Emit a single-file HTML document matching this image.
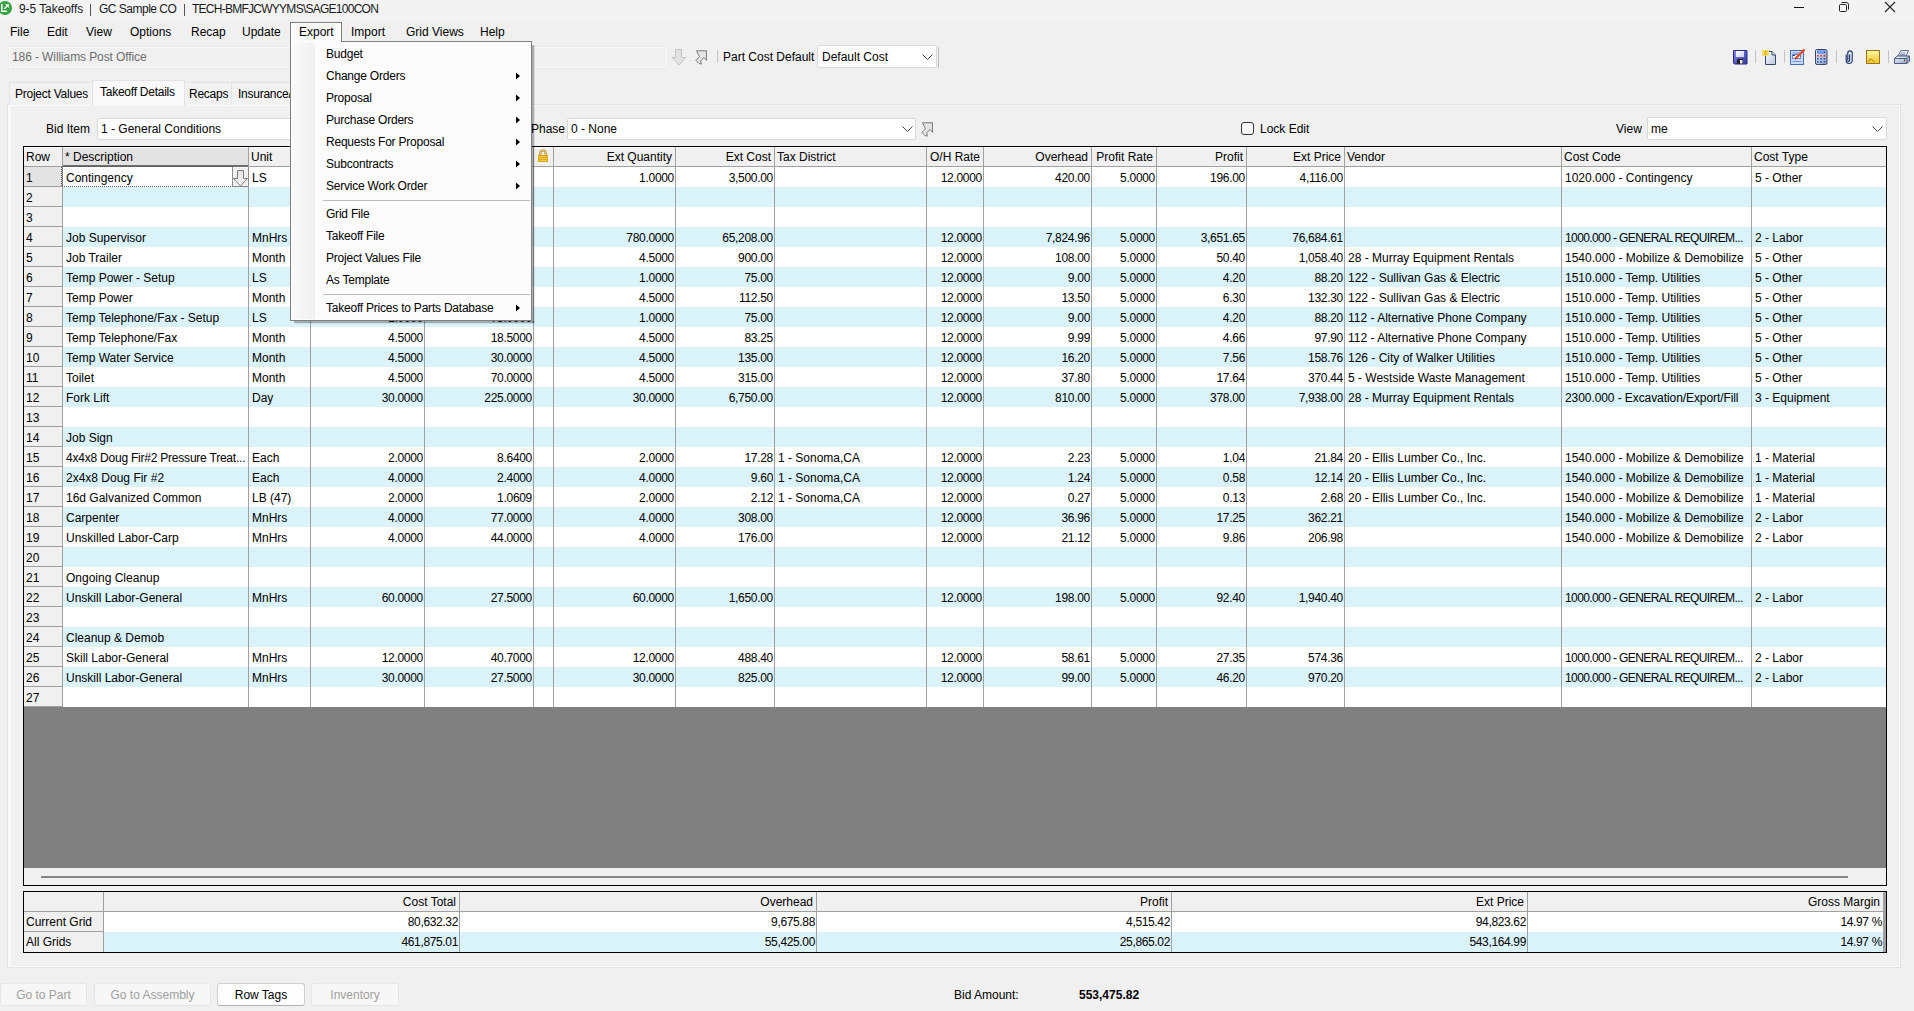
<!DOCTYPE html><html><head><meta charset="utf-8"><style>
html,body{margin:0;padding:0;}
body{width:1914px;height:1011px;position:relative;overflow:hidden;background:#f0f0f0;font-family:"Liberation Sans", sans-serif;font-size:12px;color:#000;}
div{position:absolute;box-sizing:border-box;}
.t{white-space:nowrap;line-height:14px;height:14px;}
.r{text-align:right;}
svg{position:absolute;}

</style></head><body>
<div style="left:0px;top:0px;width:1914px;height:20px;background:#f3f3f3"></div>
<svg style="left:0;top:0px" width="13" height="16" viewBox="0 0 13 16"><circle cx="5" cy="8" r="7" fill="#35a33e"/><path d="M1.8 4v8M2.2 11.3h4.8" stroke="#fff" stroke-width="1.6" fill="none"/><path d="M4.3 8.7l3.8-3.8" stroke="#fff" stroke-width="1.4"/><path d="M5 4.2h3.9v3.9z" fill="#fff"/></svg>
<div class="t" style="left:19px;top:2px;color:#1a1a1a;letter-spacing:-0.07px">9-5 Takeoffs</div>
<div style="left:90px;top:4px;width:1px;height:12px;background:#555"></div>
<div class="t" style="left:99px;top:2px;color:#1a1a1a;letter-spacing:-0.5px">GC Sample CO</div>
<div style="left:184px;top:4px;width:1px;height:12px;background:#555"></div>
<div class="t" style="left:192px;top:2px;color:#1a1a1a;letter-spacing:-0.74px">TECH-BMFJCWYYMS\SAGE100CON</div>
<div style="left:1794px;top:7px;width:10px;height:1px;background:#111"></div>
<svg style="left:1838px;top:1px" width="12" height="12" viewBox="0 0 12 12"><rect x="1.5" y="3.5" width="7" height="7" rx="1" fill="none" stroke="#222"/><path d="M3.5 1.5h5a2 2 0 0 1 2 2v5" fill="none" stroke="#222"/></svg>
<svg style="left:1884px;top:1px" width="12" height="12" viewBox="0 0 12 12"><path d="M1 1L11 11M11 1L1 11" stroke="#222" stroke-width="1.1"/></svg>
<div class="t" style="left:10px;top:25px;">File</div>
<div class="t" style="left:47px;top:25px;">Edit</div>
<div class="t" style="left:86px;top:25px;">View</div>
<div class="t" style="left:130px;top:25px;">Options</div>
<div class="t" style="left:191px;top:25px;">Recap</div>
<div class="t" style="left:242px;top:25px;">Update</div>
<div class="t" style="left:299px;top:25px;">Export</div>
<div class="t" style="left:351px;top:25px;">Import</div>
<div class="t" style="left:406px;top:25px;">Grid Views</div>
<div class="t" style="left:480px;top:25px;">Help</div>
<div style="left:8px;top:46px;width:660px;height:23px;border:1px solid #e9e9e9"></div>
<div style="left:9px;top:47px;width:658px;height:21px;background:#f0f0f0;border:1px solid #fafafa"></div>
<div class="t" style="left:12px;top:50px;color:#6d6d6d;letter-spacing:-0.1px">186 - Williams Post Office</div>
<svg style="left:671px;top:49px" width="16" height="17" viewBox="0 0 16 17"><path d="M4.5 0.5h6v8h4.5l-7 7.5-7-7.5h3.5z" fill="#e2e2e2" stroke="#c4c4c4"/></svg>
<svg style="left:695px;top:50px" width="13" height="15" viewBox="0 0 13 15"><path d="M1.5 0.8h10v9.5l-2.6-2.8-3.2 3.4 0.6 3.2-2.4-0.6-3-3 3.6-3.8z" fill="#e4e4e4" stroke="#7a7a7a" stroke-linejoin="round"/></svg>
<div style="left:717px;top:50px;width:1px;height:13px;background:#c4c4c4"></div>
<div class="t" style="left:723px;top:50px;">Part Cost Default</div>
<div style="left:817px;top:45px;width:120px;height:23px;background:#fff;border:1px solid #d9d9d9;border-radius:2px"></div>
<div class="t" style="left:822px;top:50px;">Default Cost</div>
<svg style="left:922px;top:54px" width="11" height="7" viewBox="0 0 11 7"><path d="M0.5 0.5l5 5 5-5" fill="none" stroke="#444"/></svg>
<div style="left:938px;top:47px;width:1px;height:21px;background:#bdbdbd"></div>
<svg style="left:1733px;top:50px" width="15" height="15" viewBox="0 0 15 15"><defs><linearGradient id="fl" x1="0" y1="0" x2="1" y2="1"><stop offset="0" stop-color="#8a8af0"/><stop offset="1" stop-color="#3232a0"/></linearGradient><linearGradient id="lb" x1="0" y1="0" x2="1" y2="1"><stop offset="0" stop-color="#ffffff"/><stop offset="1" stop-color="#c8d0e8"/></linearGradient></defs><path d="M0.5 0.5h13.5v13.5h-12.5l-1-1z" fill="url(#fl)" stroke="#2a2a88"/><rect x="3" y="1" width="8" height="6" fill="url(#lb)"/><rect x="4" y="9" width="6" height="5" fill="#222"/><rect x="7" y="10" width="2.5" height="3.5" fill="#e8e8e8"/></svg>
<div style="left:1755px;top:50px;width:1px;height:13px;background:#c4c4c4"></div>
<svg style="left:1762px;top:50px" width="15" height="16" viewBox="0 0 15 16"><defs><linearGradient id="pg" x1="0" y1="0" x2="1" y2="1"><stop offset="0" stop-color="#ffffff"/><stop offset="1" stop-color="#b8c4dc"/></linearGradient></defs><path d="M3.5 1.5h6.5l3.5 3.5v9.5h-10z" fill="url(#pg)" stroke="#34486a"/><path d="M10 1.5v3.5h3.5" fill="#e8eef8" stroke="#34486a"/><rect x="0" y="0" width="7" height="6" fill="#f7e26a" opacity="0.9"/><path d="M1 1l5 4M6 1l-5 4M3.5 0v6" stroke="#e8b820" stroke-width="1"/></svg>
<div style="left:1784px;top:50px;width:1px;height:13px;background:#c4c4c4"></div>
<svg style="left:1789px;top:48px" width="17" height="18" viewBox="0 0 17 18"><rect x="1.5" y="2.5" width="13" height="14" fill="#c6ddf8" stroke="#4a68b8"/><rect x="3.5" y="4.5" width="9" height="1" fill="#7a94c8"/><rect x="3.5" y="6.5" width="8" height="4" fill="#fff" stroke="#6a86c0"/><rect x="4" y="7" width="2" height="1" fill="#2030e0"/><rect x="3.5" y="13" width="9" height="1" fill="#7a94c8"/><path d="M6.5 10.5l9-9" stroke="#f04a20" stroke-width="2.4"/><path d="M6 11l1.5-0.5" stroke="#802010" stroke-width="1"/></svg>
<svg style="left:1815px;top:49px" width="13" height="16" viewBox="0 0 13 16"><defs><linearGradient id="cg" x1="0" y1="0" x2="1" y2="1"><stop offset="0" stop-color="#f4f6fc"/><stop offset="1" stop-color="#8898b8"/></linearGradient></defs><rect x="0.5" y="0.5" width="11.5" height="15" rx="1.5" fill="url(#cg)" stroke="#3a4660"/><rect x="2" y="1.5" width="8.5" height="3" rx="1.2" fill="#2a6ae0"/><rect x="3" y="2.5" width="6" height="1" fill="#bcd4ff"/><g fill="#d82a3a"><rect x="2" y="6" width="1.6" height="1.6"/><rect x="5.3" y="6" width="1.6" height="1.6"/><rect x="8.6" y="6" width="1.6" height="1.6"/></g><g fill="#1a5ad8"><rect x="2" y="9" width="1.6" height="1.6"/><rect x="5.3" y="9" width="1.6" height="1.6"/><rect x="8.6" y="9" width="1.6" height="1.6"/><rect x="2" y="12" width="1.6" height="1.6"/><rect x="5.3" y="12" width="1.6" height="1.6"/><rect x="8.6" y="12" width="1.6" height="1.6"/></g></svg>
<div style="left:1836px;top:50px;width:1px;height:13px;background:#c4c4c4"></div>
<svg style="left:1845px;top:50px" width="9" height="15" viewBox="0 0 9 15"><path d="M1.2 4.5v6a3 3 0 0 0 6 0V3a2.2 2.2 0 0 0-4.4 0v7.5a0.9 0.9 0 0 0 1.8 0V4.5" fill="none" stroke="#1f3a78" stroke-width="1.2"/></svg>
<svg style="left:1866px;top:50px" width="15" height="15" viewBox="0 0 15 15"><defs><linearGradient id="yg" x1="0" y1="0" x2="0" y2="1"><stop offset="0" stop-color="#fff6a0"/><stop offset="1" stop-color="#f0c828"/></linearGradient></defs><rect x="0.5" y="0.5" width="13" height="13" fill="url(#yg)" stroke="#9a7418"/><path d="M2 11.5l2.5-2.5 2.5 1.5 1.5 2" stroke="#c89a18" fill="none" stroke-width="1.2"/></svg>
<div style="left:1888px;top:50px;width:1px;height:13px;background:#c4c4c4"></div>
<svg style="left:1894px;top:50px" width="16" height="15" viewBox="0 0 16 15"><defs><linearGradient id="prg" x1="0" y1="0" x2="1" y2="1"><stop offset="0" stop-color="#ffffff"/><stop offset="1" stop-color="#8a9cc0"/></linearGradient></defs><path d="M4 6L7 0.5h7.5L12 6z" fill="#eef2fa" stroke="#5a6c90"/><path d="M6.5 3h5M6 4.5h5" stroke="#8a9ab8"/><path d="M0.5 8.5L3 6h12.5v5L13 13.5H0.5z" fill="url(#prg)" stroke="#4a5c80"/><path d="M0.5 8.5h12.5v5M13 8.5l2.5-2.5" fill="none" stroke="#4a5c80"/><rect x="10" y="9.5" width="1" height="2" fill="#d02020"/><rect x="10" y="9" width="1" height="1" fill="#20a040"/></svg>
<div style="left:7px;top:104px;width:1894px;height:864px;border:1px solid #e3e3e3;background:#f0f0f0"></div>
<div style="left:8px;top:105px;width:3px;height:862px;background:#f9f9f9"></div>
<div style="left:8px;top:105px;width:1892px;height:1px;background:#f9f9f9"></div>
<div style="left:1899px;top:105px;width:1px;height:862px;background:#fafafa"></div>
<div style="left:8px;top:966px;width:1892px;height:1px;background:#fafafa"></div>
<div style="left:9px;top:82px;width:84px;height:23px;background:#f2f2f2;border:1px solid #e3e3e3;border-bottom:none"></div>
<div class="t" style="left:15px;top:87px;letter-spacing:-0.25px">Project Values</div>
<div style="left:184px;top:82px;width:48px;height:23px;background:#f2f2f2;border:1px solid #e3e3e3;border-bottom:none"></div>
<div class="t" style="left:189px;top:87px;letter-spacing:-0.25px">Recaps</div>
<div style="left:231px;top:82px;width:70px;height:23px;background:#f2f2f2;border:1px solid #e3e3e3;border-bottom:none"></div>
<div class="t" style="left:238px;top:87px;letter-spacing:-0.25px">Insurance/...</div>
<div style="left:92px;top:80px;width:93px;height:26px;background:#f9f9f9;border:1px solid #e3e3e3;border-bottom:none"></div>
<div class="t" style="left:100px;top:85px;letter-spacing:-0.25px">Takeoff Details</div>
<div class="t" style="left:46px;top:122px;">Bid Item</div>
<div style="left:97px;top:118px;width:300px;height:22px;background:#fff;border:1px solid #d9d9d9;border-radius:2px"></div>
<div class="t" style="left:101px;top:122px;">1 - General Conditions</div>
<div class="t" style="left:531px;top:122px;">Phase</div>
<div style="left:567px;top:118px;width:349px;height:22px;background:#fff;border:1px solid #d9d9d9;border-radius:2px"></div>
<div class="t" style="left:571px;top:122px;">0 - None</div>
<svg style="left:902px;top:126px" width="11" height="7" viewBox="0 0 11 7"><path d="M0.5 0.5l5 5 5-5" fill="none" stroke="#444"/></svg>
<svg style="left:921px;top:122px" width="13" height="15" viewBox="0 0 13 15"><path d="M1.5 0.8h10v9.5l-2.6-2.8-3.2 3.4 0.6 3.2-2.4-0.6-3-3 3.6-3.8z" fill="#e4e4e4" stroke="#7a7a7a" stroke-linejoin="round"/></svg>
<div style="left:1241px;top:122px;width:13px;height:13px;background:#f7f7f7;border:1px solid #333;border-radius:3px"></div>
<div class="t" style="left:1260px;top:122px;">Lock Edit</div>
<div class="t" style="left:1616px;top:122px;">View</div>
<div style="left:1647px;top:117px;width:240px;height:23px;background:#fff;border:1px solid #d9d9d9;border-radius:2px"></div>
<div class="t" style="left:1651px;top:122px;">me</div>
<svg style="left:1872px;top:126px" width="11" height="7" viewBox="0 0 11 7"><path d="M0.5 0.5l5 5 5-5" fill="none" stroke="#444"/></svg>
<div style="left:23px;top:146px;width:1864px;height:740px;border:1px solid #000;background:#f0f0f0"></div>
<div style="left:63px;top:167px;width:1823px;height:20px;background:#ffffff"></div>
<div style="left:63px;top:187px;width:1823px;height:20px;background:#daf2f9"></div>
<div style="left:63px;top:207px;width:1823px;height:20px;background:#ffffff"></div>
<div style="left:63px;top:227px;width:1823px;height:20px;background:#daf2f9"></div>
<div style="left:63px;top:247px;width:1823px;height:20px;background:#ffffff"></div>
<div style="left:63px;top:267px;width:1823px;height:20px;background:#daf2f9"></div>
<div style="left:63px;top:287px;width:1823px;height:20px;background:#ffffff"></div>
<div style="left:63px;top:307px;width:1823px;height:20px;background:#daf2f9"></div>
<div style="left:63px;top:327px;width:1823px;height:20px;background:#ffffff"></div>
<div style="left:63px;top:347px;width:1823px;height:20px;background:#daf2f9"></div>
<div style="left:63px;top:367px;width:1823px;height:20px;background:#ffffff"></div>
<div style="left:63px;top:387px;width:1823px;height:20px;background:#daf2f9"></div>
<div style="left:63px;top:407px;width:1823px;height:20px;background:#ffffff"></div>
<div style="left:63px;top:427px;width:1823px;height:20px;background:#daf2f9"></div>
<div style="left:63px;top:447px;width:1823px;height:20px;background:#ffffff"></div>
<div style="left:63px;top:467px;width:1823px;height:20px;background:#daf2f9"></div>
<div style="left:63px;top:487px;width:1823px;height:20px;background:#ffffff"></div>
<div style="left:63px;top:507px;width:1823px;height:20px;background:#daf2f9"></div>
<div style="left:63px;top:527px;width:1823px;height:20px;background:#ffffff"></div>
<div style="left:63px;top:547px;width:1823px;height:20px;background:#daf2f9"></div>
<div style="left:63px;top:567px;width:1823px;height:20px;background:#ffffff"></div>
<div style="left:63px;top:587px;width:1823px;height:20px;background:#daf2f9"></div>
<div style="left:63px;top:607px;width:1823px;height:20px;background:#ffffff"></div>
<div style="left:63px;top:627px;width:1823px;height:20px;background:#daf2f9"></div>
<div style="left:63px;top:647px;width:1823px;height:20px;background:#ffffff"></div>
<div style="left:63px;top:667px;width:1823px;height:20px;background:#daf2f9"></div>
<div style="left:63px;top:687px;width:1823px;height:20px;background:#ffffff"></div>
<div style="left:24px;top:707px;width:1862px;height:161px;background:#808080"></div>
<div style="left:41px;top:876px;width:1807px;height:2px;background:#858585"></div>
<div style="left:24px;top:147px;width:1862px;height:20px;background:#f0f0f0"></div>
<div style="left:24px;top:147px;width:38px;height:1px;background:#fbfbfb"></div>
<div class="t" style="left:26px;top:150px;">Row</div>
<div style="left:63px;top:147px;width:185px;height:20px;background:#e3e3e3;border-bottom:2px solid #6e6e6e"></div>
<div style="left:63px;top:147px;width:185px;height:1px;background:#fbfbfb"></div>
<div class="t" style="left:65px;top:150px;">* Description</div>
<div style="left:249px;top:147px;width:61px;height:1px;background:#fbfbfb"></div>
<div class="t" style="left:251px;top:150px;">Unit</div>
<div style="left:311px;top:147px;width:113px;height:1px;background:#fbfbfb"></div>
<div class="t r" style="left:21px;width:400px;top:150px;">Quantity</div>
<div style="left:425px;top:147px;width:108px;height:1px;background:#fbfbfb"></div>
<div class="t r" style="left:130px;width:400px;top:150px;">Unit Cost</div>
<div style="left:534px;top:147px;width:19px;height:1px;background:#fbfbfb"></div>
<div style="left:554px;top:147px;width:121px;height:1px;background:#fbfbfb"></div>
<div class="t r" style="left:272px;width:400px;top:150px;">Ext Quantity</div>
<div style="left:676px;top:147px;width:98px;height:1px;background:#fbfbfb"></div>
<div class="t r" style="left:371px;width:400px;top:150px;">Ext Cost</div>
<div style="left:775px;top:147px;width:151px;height:1px;background:#fbfbfb"></div>
<div class="t" style="left:777px;top:150px;">Tax District</div>
<div style="left:927px;top:147px;width:56px;height:1px;background:#fbfbfb"></div>
<div class="t r" style="left:580px;width:400px;top:150px;">O/H Rate</div>
<div style="left:984px;top:147px;width:107px;height:1px;background:#fbfbfb"></div>
<div class="t r" style="left:688px;width:400px;top:150px;">Overhead</div>
<div style="left:1092px;top:147px;width:64px;height:1px;background:#fbfbfb"></div>
<div class="t r" style="left:753px;width:400px;top:150px;">Profit Rate</div>
<div style="left:1157px;top:147px;width:89px;height:1px;background:#fbfbfb"></div>
<div class="t r" style="left:843px;width:400px;top:150px;">Profit</div>
<div style="left:1247px;top:147px;width:97px;height:1px;background:#fbfbfb"></div>
<div class="t r" style="left:941px;width:400px;top:150px;">Ext Price</div>
<div style="left:1345px;top:147px;width:216px;height:1px;background:#fbfbfb"></div>
<div class="t" style="left:1347px;top:150px;">Vendor</div>
<div style="left:1562px;top:147px;width:189px;height:1px;background:#fbfbfb"></div>
<div class="t" style="left:1564px;top:150px;">Cost Code</div>
<div style="left:1752px;top:147px;width:134px;height:1px;background:#fbfbfb"></div>
<div class="t" style="left:1754px;top:150px;">Cost Type</div>
<div style="left:24px;top:166px;width:1862px;height:1px;background:#a0a0a0"></div>
<div style="left:63px;top:165px;width:185px;height:2px;background:#6e6e6e"></div>
<div style="left:24px;top:167px;width:38px;height:20px;background:#e3e3e3"></div>
<div style="left:24px;top:186px;width:38px;height:1px;background:#a0a0a0"></div>
<div class="t" style="left:26px;top:171px;">1</div>
<div style="left:24px;top:187px;width:38px;height:20px;background:#f0f0f0"></div>
<div style="left:24px;top:206px;width:38px;height:1px;background:#a0a0a0"></div>
<div class="t" style="left:26px;top:191px;">2</div>
<div style="left:24px;top:207px;width:38px;height:20px;background:#f0f0f0"></div>
<div style="left:24px;top:226px;width:38px;height:1px;background:#a0a0a0"></div>
<div class="t" style="left:26px;top:211px;">3</div>
<div style="left:24px;top:227px;width:38px;height:20px;background:#f0f0f0"></div>
<div style="left:24px;top:246px;width:38px;height:1px;background:#a0a0a0"></div>
<div class="t" style="left:26px;top:231px;">4</div>
<div style="left:24px;top:247px;width:38px;height:20px;background:#f0f0f0"></div>
<div style="left:24px;top:266px;width:38px;height:1px;background:#a0a0a0"></div>
<div class="t" style="left:26px;top:251px;">5</div>
<div style="left:24px;top:267px;width:38px;height:20px;background:#f0f0f0"></div>
<div style="left:24px;top:286px;width:38px;height:1px;background:#a0a0a0"></div>
<div class="t" style="left:26px;top:271px;">6</div>
<div style="left:24px;top:287px;width:38px;height:20px;background:#f0f0f0"></div>
<div style="left:24px;top:306px;width:38px;height:1px;background:#a0a0a0"></div>
<div class="t" style="left:26px;top:291px;">7</div>
<div style="left:24px;top:307px;width:38px;height:20px;background:#f0f0f0"></div>
<div style="left:24px;top:326px;width:38px;height:1px;background:#a0a0a0"></div>
<div class="t" style="left:26px;top:311px;">8</div>
<div style="left:24px;top:327px;width:38px;height:20px;background:#f0f0f0"></div>
<div style="left:24px;top:346px;width:38px;height:1px;background:#a0a0a0"></div>
<div class="t" style="left:26px;top:331px;">9</div>
<div style="left:24px;top:347px;width:38px;height:20px;background:#f0f0f0"></div>
<div style="left:24px;top:366px;width:38px;height:1px;background:#a0a0a0"></div>
<div class="t" style="left:26px;top:351px;">10</div>
<div style="left:24px;top:367px;width:38px;height:20px;background:#f0f0f0"></div>
<div style="left:24px;top:386px;width:38px;height:1px;background:#a0a0a0"></div>
<div class="t" style="left:26px;top:371px;">11</div>
<div style="left:24px;top:387px;width:38px;height:20px;background:#f0f0f0"></div>
<div style="left:24px;top:406px;width:38px;height:1px;background:#a0a0a0"></div>
<div class="t" style="left:26px;top:391px;">12</div>
<div style="left:24px;top:407px;width:38px;height:20px;background:#f0f0f0"></div>
<div style="left:24px;top:426px;width:38px;height:1px;background:#a0a0a0"></div>
<div class="t" style="left:26px;top:411px;">13</div>
<div style="left:24px;top:427px;width:38px;height:20px;background:#f0f0f0"></div>
<div style="left:24px;top:446px;width:38px;height:1px;background:#a0a0a0"></div>
<div class="t" style="left:26px;top:431px;">14</div>
<div style="left:24px;top:447px;width:38px;height:20px;background:#f0f0f0"></div>
<div style="left:24px;top:466px;width:38px;height:1px;background:#a0a0a0"></div>
<div class="t" style="left:26px;top:451px;">15</div>
<div style="left:24px;top:467px;width:38px;height:20px;background:#f0f0f0"></div>
<div style="left:24px;top:486px;width:38px;height:1px;background:#a0a0a0"></div>
<div class="t" style="left:26px;top:471px;">16</div>
<div style="left:24px;top:487px;width:38px;height:20px;background:#f0f0f0"></div>
<div style="left:24px;top:506px;width:38px;height:1px;background:#a0a0a0"></div>
<div class="t" style="left:26px;top:491px;">17</div>
<div style="left:24px;top:507px;width:38px;height:20px;background:#f0f0f0"></div>
<div style="left:24px;top:526px;width:38px;height:1px;background:#a0a0a0"></div>
<div class="t" style="left:26px;top:511px;">18</div>
<div style="left:24px;top:527px;width:38px;height:20px;background:#f0f0f0"></div>
<div style="left:24px;top:546px;width:38px;height:1px;background:#a0a0a0"></div>
<div class="t" style="left:26px;top:531px;">19</div>
<div style="left:24px;top:547px;width:38px;height:20px;background:#f0f0f0"></div>
<div style="left:24px;top:566px;width:38px;height:1px;background:#a0a0a0"></div>
<div class="t" style="left:26px;top:551px;">20</div>
<div style="left:24px;top:567px;width:38px;height:20px;background:#f0f0f0"></div>
<div style="left:24px;top:586px;width:38px;height:1px;background:#a0a0a0"></div>
<div class="t" style="left:26px;top:571px;">21</div>
<div style="left:24px;top:587px;width:38px;height:20px;background:#f0f0f0"></div>
<div style="left:24px;top:606px;width:38px;height:1px;background:#a0a0a0"></div>
<div class="t" style="left:26px;top:591px;">22</div>
<div style="left:24px;top:607px;width:38px;height:20px;background:#f0f0f0"></div>
<div style="left:24px;top:626px;width:38px;height:1px;background:#a0a0a0"></div>
<div class="t" style="left:26px;top:611px;">23</div>
<div style="left:24px;top:627px;width:38px;height:20px;background:#f0f0f0"></div>
<div style="left:24px;top:646px;width:38px;height:1px;background:#a0a0a0"></div>
<div class="t" style="left:26px;top:631px;">24</div>
<div style="left:24px;top:647px;width:38px;height:20px;background:#f0f0f0"></div>
<div style="left:24px;top:666px;width:38px;height:1px;background:#a0a0a0"></div>
<div class="t" style="left:26px;top:651px;">25</div>
<div style="left:24px;top:667px;width:38px;height:20px;background:#f0f0f0"></div>
<div style="left:24px;top:686px;width:38px;height:1px;background:#a0a0a0"></div>
<div class="t" style="left:26px;top:671px;">26</div>
<div style="left:24px;top:687px;width:38px;height:20px;background:#f0f0f0"></div>
<div style="left:24px;top:706px;width:38px;height:1px;background:#a0a0a0"></div>
<div class="t" style="left:26px;top:691px;">27</div>
<div style="left:62px;top:147px;width:1px;height:560px;background:#a0a0a0"></div>
<div style="left:248px;top:147px;width:1px;height:560px;background:#a0a0a0"></div>
<div style="left:310px;top:147px;width:1px;height:560px;background:#a0a0a0"></div>
<div style="left:424px;top:147px;width:1px;height:560px;background:#a0a0a0"></div>
<div style="left:533px;top:147px;width:1px;height:560px;background:#a0a0a0"></div>
<div style="left:553px;top:147px;width:1px;height:560px;background:#a0a0a0"></div>
<div style="left:675px;top:147px;width:1px;height:560px;background:#a0a0a0"></div>
<div style="left:774px;top:147px;width:1px;height:560px;background:#a0a0a0"></div>
<div style="left:926px;top:147px;width:1px;height:560px;background:#a0a0a0"></div>
<div style="left:983px;top:147px;width:1px;height:560px;background:#a0a0a0"></div>
<div style="left:1091px;top:147px;width:1px;height:560px;background:#a0a0a0"></div>
<div style="left:1156px;top:147px;width:1px;height:560px;background:#a0a0a0"></div>
<div style="left:1246px;top:147px;width:1px;height:560px;background:#a0a0a0"></div>
<div style="left:1344px;top:147px;width:1px;height:560px;background:#a0a0a0"></div>
<div style="left:1561px;top:147px;width:1px;height:560px;background:#a0a0a0"></div>
<div style="left:1751px;top:147px;width:1px;height:560px;background:#a0a0a0"></div>
<div class="t" style="left:66px;width:182px;top:171px;overflow:hidden;">Contingency</div>
<div class="t" style="left:252px;width:58px;top:171px;overflow:hidden;">LS</div>
<div class="t r" style="left:311px;width:112px;top:171px;overflow:hidden;letter-spacing:-0.3px;">1.0000</div>
<div class="t r" style="left:425px;width:107px;top:171px;overflow:hidden;letter-spacing:-0.3px;">3,500.0000</div>
<div class="t r" style="left:554px;width:120px;top:171px;overflow:hidden;letter-spacing:-0.3px;">1.0000</div>
<div class="t r" style="left:676px;width:97px;top:171px;overflow:hidden;letter-spacing:-0.3px;">3,500.00</div>
<div class="t r" style="left:927px;width:55px;top:171px;overflow:hidden;letter-spacing:-0.3px;">12.0000</div>
<div class="t r" style="left:984px;width:106px;top:171px;overflow:hidden;letter-spacing:-0.3px;">420.00</div>
<div class="t r" style="left:1092px;width:63px;top:171px;overflow:hidden;letter-spacing:-0.3px;">5.0000</div>
<div class="t r" style="left:1157px;width:88px;top:171px;overflow:hidden;letter-spacing:-0.3px;">196.00</div>
<div class="t r" style="left:1247px;width:96px;top:171px;overflow:hidden;letter-spacing:-0.3px;">4,116.00</div>
<div class="t" style="left:1565px;width:186px;top:171px;overflow:hidden;">1020.000 - Contingency</div>
<div class="t" style="left:1755px;width:131px;top:171px;overflow:hidden;">5 - Other</div>
<div class="t" style="left:66px;width:182px;top:231px;overflow:hidden;">Job Supervisor</div>
<div class="t" style="left:252px;width:58px;top:231px;overflow:hidden;">MnHrs</div>
<div class="t r" style="left:311px;width:112px;top:231px;overflow:hidden;letter-spacing:-0.3px;">780.0000</div>
<div class="t r" style="left:425px;width:107px;top:231px;overflow:hidden;letter-spacing:-0.3px;">83.6000</div>
<div class="t r" style="left:554px;width:120px;top:231px;overflow:hidden;letter-spacing:-0.3px;">780.0000</div>
<div class="t r" style="left:676px;width:97px;top:231px;overflow:hidden;letter-spacing:-0.3px;">65,208.00</div>
<div class="t r" style="left:927px;width:55px;top:231px;overflow:hidden;letter-spacing:-0.3px;">12.0000</div>
<div class="t r" style="left:984px;width:106px;top:231px;overflow:hidden;letter-spacing:-0.3px;">7,824.96</div>
<div class="t r" style="left:1092px;width:63px;top:231px;overflow:hidden;letter-spacing:-0.3px;">5.0000</div>
<div class="t r" style="left:1157px;width:88px;top:231px;overflow:hidden;letter-spacing:-0.3px;">3,651.65</div>
<div class="t r" style="left:1247px;width:96px;top:231px;overflow:hidden;letter-spacing:-0.3px;">76,684.61</div>
<div class="t" style="left:1565px;width:186px;top:231px;overflow:hidden;letter-spacing:-0.6px;">1000.000 - GENERAL REQUIREM...</div>
<div class="t" style="left:1755px;width:131px;top:231px;overflow:hidden;">2 - Labor</div>
<div class="t" style="left:66px;width:182px;top:251px;overflow:hidden;">Job Trailer</div>
<div class="t" style="left:252px;width:58px;top:251px;overflow:hidden;">Month</div>
<div class="t r" style="left:311px;width:112px;top:251px;overflow:hidden;letter-spacing:-0.3px;">4.5000</div>
<div class="t r" style="left:425px;width:107px;top:251px;overflow:hidden;letter-spacing:-0.3px;">200.0000</div>
<div class="t r" style="left:554px;width:120px;top:251px;overflow:hidden;letter-spacing:-0.3px;">4.5000</div>
<div class="t r" style="left:676px;width:97px;top:251px;overflow:hidden;letter-spacing:-0.3px;">900.00</div>
<div class="t r" style="left:927px;width:55px;top:251px;overflow:hidden;letter-spacing:-0.3px;">12.0000</div>
<div class="t r" style="left:984px;width:106px;top:251px;overflow:hidden;letter-spacing:-0.3px;">108.00</div>
<div class="t r" style="left:1092px;width:63px;top:251px;overflow:hidden;letter-spacing:-0.3px;">5.0000</div>
<div class="t r" style="left:1157px;width:88px;top:251px;overflow:hidden;letter-spacing:-0.3px;">50.40</div>
<div class="t r" style="left:1247px;width:96px;top:251px;overflow:hidden;letter-spacing:-0.3px;">1,058.40</div>
<div class="t" style="left:1348px;width:213px;top:251px;overflow:hidden;">28 - Murray Equipment Rentals</div>
<div class="t" style="left:1565px;width:186px;top:251px;overflow:hidden;">1540.000 - Mobilize &amp; Demobilize</div>
<div class="t" style="left:1755px;width:131px;top:251px;overflow:hidden;">5 - Other</div>
<div class="t" style="left:66px;width:182px;top:271px;overflow:hidden;">Temp Power - Setup</div>
<div class="t" style="left:252px;width:58px;top:271px;overflow:hidden;">LS</div>
<div class="t r" style="left:311px;width:112px;top:271px;overflow:hidden;letter-spacing:-0.3px;">1.0000</div>
<div class="t r" style="left:425px;width:107px;top:271px;overflow:hidden;letter-spacing:-0.3px;">75.0000</div>
<div class="t r" style="left:554px;width:120px;top:271px;overflow:hidden;letter-spacing:-0.3px;">1.0000</div>
<div class="t r" style="left:676px;width:97px;top:271px;overflow:hidden;letter-spacing:-0.3px;">75.00</div>
<div class="t r" style="left:927px;width:55px;top:271px;overflow:hidden;letter-spacing:-0.3px;">12.0000</div>
<div class="t r" style="left:984px;width:106px;top:271px;overflow:hidden;letter-spacing:-0.3px;">9.00</div>
<div class="t r" style="left:1092px;width:63px;top:271px;overflow:hidden;letter-spacing:-0.3px;">5.0000</div>
<div class="t r" style="left:1157px;width:88px;top:271px;overflow:hidden;letter-spacing:-0.3px;">4.20</div>
<div class="t r" style="left:1247px;width:96px;top:271px;overflow:hidden;letter-spacing:-0.3px;">88.20</div>
<div class="t" style="left:1348px;width:213px;top:271px;overflow:hidden;">122 - Sullivan Gas &amp; Electric</div>
<div class="t" style="left:1565px;width:186px;top:271px;overflow:hidden;">1510.000 - Temp. Utilities</div>
<div class="t" style="left:1755px;width:131px;top:271px;overflow:hidden;">5 - Other</div>
<div class="t" style="left:66px;width:182px;top:291px;overflow:hidden;">Temp Power</div>
<div class="t" style="left:252px;width:58px;top:291px;overflow:hidden;">Month</div>
<div class="t r" style="left:311px;width:112px;top:291px;overflow:hidden;letter-spacing:-0.3px;">4.5000</div>
<div class="t r" style="left:425px;width:107px;top:291px;overflow:hidden;letter-spacing:-0.3px;">25.0000</div>
<div class="t r" style="left:554px;width:120px;top:291px;overflow:hidden;letter-spacing:-0.3px;">4.5000</div>
<div class="t r" style="left:676px;width:97px;top:291px;overflow:hidden;letter-spacing:-0.3px;">112.50</div>
<div class="t r" style="left:927px;width:55px;top:291px;overflow:hidden;letter-spacing:-0.3px;">12.0000</div>
<div class="t r" style="left:984px;width:106px;top:291px;overflow:hidden;letter-spacing:-0.3px;">13.50</div>
<div class="t r" style="left:1092px;width:63px;top:291px;overflow:hidden;letter-spacing:-0.3px;">5.0000</div>
<div class="t r" style="left:1157px;width:88px;top:291px;overflow:hidden;letter-spacing:-0.3px;">6.30</div>
<div class="t r" style="left:1247px;width:96px;top:291px;overflow:hidden;letter-spacing:-0.3px;">132.30</div>
<div class="t" style="left:1348px;width:213px;top:291px;overflow:hidden;">122 - Sullivan Gas &amp; Electric</div>
<div class="t" style="left:1565px;width:186px;top:291px;overflow:hidden;">1510.000 - Temp. Utilities</div>
<div class="t" style="left:1755px;width:131px;top:291px;overflow:hidden;">5 - Other</div>
<div class="t" style="left:66px;width:182px;top:311px;overflow:hidden;">Temp Telephone/Fax - Setup</div>
<div class="t" style="left:252px;width:58px;top:311px;overflow:hidden;">LS</div>
<div class="t r" style="left:311px;width:112px;top:311px;overflow:hidden;letter-spacing:-0.3px;">1.0000</div>
<div class="t r" style="left:425px;width:107px;top:311px;overflow:hidden;letter-spacing:-0.3px;">75.0000</div>
<div class="t r" style="left:554px;width:120px;top:311px;overflow:hidden;letter-spacing:-0.3px;">1.0000</div>
<div class="t r" style="left:676px;width:97px;top:311px;overflow:hidden;letter-spacing:-0.3px;">75.00</div>
<div class="t r" style="left:927px;width:55px;top:311px;overflow:hidden;letter-spacing:-0.3px;">12.0000</div>
<div class="t r" style="left:984px;width:106px;top:311px;overflow:hidden;letter-spacing:-0.3px;">9.00</div>
<div class="t r" style="left:1092px;width:63px;top:311px;overflow:hidden;letter-spacing:-0.3px;">5.0000</div>
<div class="t r" style="left:1157px;width:88px;top:311px;overflow:hidden;letter-spacing:-0.3px;">4.20</div>
<div class="t r" style="left:1247px;width:96px;top:311px;overflow:hidden;letter-spacing:-0.3px;">88.20</div>
<div class="t" style="left:1348px;width:213px;top:311px;overflow:hidden;">112 - Alternative Phone Company</div>
<div class="t" style="left:1565px;width:186px;top:311px;overflow:hidden;">1510.000 - Temp. Utilities</div>
<div class="t" style="left:1755px;width:131px;top:311px;overflow:hidden;">5 - Other</div>
<div class="t" style="left:66px;width:182px;top:331px;overflow:hidden;">Temp Telephone/Fax</div>
<div class="t" style="left:252px;width:58px;top:331px;overflow:hidden;">Month</div>
<div class="t r" style="left:311px;width:112px;top:331px;overflow:hidden;letter-spacing:-0.3px;">4.5000</div>
<div class="t r" style="left:425px;width:107px;top:331px;overflow:hidden;letter-spacing:-0.3px;">18.5000</div>
<div class="t r" style="left:554px;width:120px;top:331px;overflow:hidden;letter-spacing:-0.3px;">4.5000</div>
<div class="t r" style="left:676px;width:97px;top:331px;overflow:hidden;letter-spacing:-0.3px;">83.25</div>
<div class="t r" style="left:927px;width:55px;top:331px;overflow:hidden;letter-spacing:-0.3px;">12.0000</div>
<div class="t r" style="left:984px;width:106px;top:331px;overflow:hidden;letter-spacing:-0.3px;">9.99</div>
<div class="t r" style="left:1092px;width:63px;top:331px;overflow:hidden;letter-spacing:-0.3px;">5.0000</div>
<div class="t r" style="left:1157px;width:88px;top:331px;overflow:hidden;letter-spacing:-0.3px;">4.66</div>
<div class="t r" style="left:1247px;width:96px;top:331px;overflow:hidden;letter-spacing:-0.3px;">97.90</div>
<div class="t" style="left:1348px;width:213px;top:331px;overflow:hidden;">112 - Alternative Phone Company</div>
<div class="t" style="left:1565px;width:186px;top:331px;overflow:hidden;">1510.000 - Temp. Utilities</div>
<div class="t" style="left:1755px;width:131px;top:331px;overflow:hidden;">5 - Other</div>
<div class="t" style="left:66px;width:182px;top:351px;overflow:hidden;">Temp Water Service</div>
<div class="t" style="left:252px;width:58px;top:351px;overflow:hidden;">Month</div>
<div class="t r" style="left:311px;width:112px;top:351px;overflow:hidden;letter-spacing:-0.3px;">4.5000</div>
<div class="t r" style="left:425px;width:107px;top:351px;overflow:hidden;letter-spacing:-0.3px;">30.0000</div>
<div class="t r" style="left:554px;width:120px;top:351px;overflow:hidden;letter-spacing:-0.3px;">4.5000</div>
<div class="t r" style="left:676px;width:97px;top:351px;overflow:hidden;letter-spacing:-0.3px;">135.00</div>
<div class="t r" style="left:927px;width:55px;top:351px;overflow:hidden;letter-spacing:-0.3px;">12.0000</div>
<div class="t r" style="left:984px;width:106px;top:351px;overflow:hidden;letter-spacing:-0.3px;">16.20</div>
<div class="t r" style="left:1092px;width:63px;top:351px;overflow:hidden;letter-spacing:-0.3px;">5.0000</div>
<div class="t r" style="left:1157px;width:88px;top:351px;overflow:hidden;letter-spacing:-0.3px;">7.56</div>
<div class="t r" style="left:1247px;width:96px;top:351px;overflow:hidden;letter-spacing:-0.3px;">158.76</div>
<div class="t" style="left:1348px;width:213px;top:351px;overflow:hidden;">126 - City of Walker Utilities</div>
<div class="t" style="left:1565px;width:186px;top:351px;overflow:hidden;">1510.000 - Temp. Utilities</div>
<div class="t" style="left:1755px;width:131px;top:351px;overflow:hidden;">5 - Other</div>
<div class="t" style="left:66px;width:182px;top:371px;overflow:hidden;">Toilet</div>
<div class="t" style="left:252px;width:58px;top:371px;overflow:hidden;">Month</div>
<div class="t r" style="left:311px;width:112px;top:371px;overflow:hidden;letter-spacing:-0.3px;">4.5000</div>
<div class="t r" style="left:425px;width:107px;top:371px;overflow:hidden;letter-spacing:-0.3px;">70.0000</div>
<div class="t r" style="left:554px;width:120px;top:371px;overflow:hidden;letter-spacing:-0.3px;">4.5000</div>
<div class="t r" style="left:676px;width:97px;top:371px;overflow:hidden;letter-spacing:-0.3px;">315.00</div>
<div class="t r" style="left:927px;width:55px;top:371px;overflow:hidden;letter-spacing:-0.3px;">12.0000</div>
<div class="t r" style="left:984px;width:106px;top:371px;overflow:hidden;letter-spacing:-0.3px;">37.80</div>
<div class="t r" style="left:1092px;width:63px;top:371px;overflow:hidden;letter-spacing:-0.3px;">5.0000</div>
<div class="t r" style="left:1157px;width:88px;top:371px;overflow:hidden;letter-spacing:-0.3px;">17.64</div>
<div class="t r" style="left:1247px;width:96px;top:371px;overflow:hidden;letter-spacing:-0.3px;">370.44</div>
<div class="t" style="left:1348px;width:213px;top:371px;overflow:hidden;">5 - Westside Waste Management</div>
<div class="t" style="left:1565px;width:186px;top:371px;overflow:hidden;">1510.000 - Temp. Utilities</div>
<div class="t" style="left:1755px;width:131px;top:371px;overflow:hidden;">5 - Other</div>
<div class="t" style="left:66px;width:182px;top:391px;overflow:hidden;">Fork Lift</div>
<div class="t" style="left:252px;width:58px;top:391px;overflow:hidden;">Day</div>
<div class="t r" style="left:311px;width:112px;top:391px;overflow:hidden;letter-spacing:-0.3px;">30.0000</div>
<div class="t r" style="left:425px;width:107px;top:391px;overflow:hidden;letter-spacing:-0.3px;">225.0000</div>
<div class="t r" style="left:554px;width:120px;top:391px;overflow:hidden;letter-spacing:-0.3px;">30.0000</div>
<div class="t r" style="left:676px;width:97px;top:391px;overflow:hidden;letter-spacing:-0.3px;">6,750.00</div>
<div class="t r" style="left:927px;width:55px;top:391px;overflow:hidden;letter-spacing:-0.3px;">12.0000</div>
<div class="t r" style="left:984px;width:106px;top:391px;overflow:hidden;letter-spacing:-0.3px;">810.00</div>
<div class="t r" style="left:1092px;width:63px;top:391px;overflow:hidden;letter-spacing:-0.3px;">5.0000</div>
<div class="t r" style="left:1157px;width:88px;top:391px;overflow:hidden;letter-spacing:-0.3px;">378.00</div>
<div class="t r" style="left:1247px;width:96px;top:391px;overflow:hidden;letter-spacing:-0.3px;">7,938.00</div>
<div class="t" style="left:1348px;width:213px;top:391px;overflow:hidden;">28 - Murray Equipment Rentals</div>
<div class="t" style="left:1565px;width:186px;top:391px;overflow:hidden;letter-spacing:-0.08px;">2300.000 - Excavation/Export/Fill</div>
<div class="t" style="left:1755px;width:131px;top:391px;overflow:hidden;">3 - Equipment</div>
<div class="t" style="left:66px;width:182px;top:431px;overflow:hidden;">Job Sign</div>
<div class="t" style="left:66px;width:182px;top:451px;overflow:hidden;letter-spacing:-0.22px;">4x4x8 Doug Fir#2 Pressure Treat...</div>
<div class="t" style="left:252px;width:58px;top:451px;overflow:hidden;">Each</div>
<div class="t r" style="left:311px;width:112px;top:451px;overflow:hidden;letter-spacing:-0.3px;">2.0000</div>
<div class="t r" style="left:425px;width:107px;top:451px;overflow:hidden;letter-spacing:-0.3px;">8.6400</div>
<div class="t r" style="left:554px;width:120px;top:451px;overflow:hidden;letter-spacing:-0.3px;">2.0000</div>
<div class="t r" style="left:676px;width:97px;top:451px;overflow:hidden;letter-spacing:-0.3px;">17.28</div>
<div class="t" style="left:778px;width:148px;top:451px;overflow:hidden;">1 - Sonoma,CA</div>
<div class="t r" style="left:927px;width:55px;top:451px;overflow:hidden;letter-spacing:-0.3px;">12.0000</div>
<div class="t r" style="left:984px;width:106px;top:451px;overflow:hidden;letter-spacing:-0.3px;">2.23</div>
<div class="t r" style="left:1092px;width:63px;top:451px;overflow:hidden;letter-spacing:-0.3px;">5.0000</div>
<div class="t r" style="left:1157px;width:88px;top:451px;overflow:hidden;letter-spacing:-0.3px;">1.04</div>
<div class="t r" style="left:1247px;width:96px;top:451px;overflow:hidden;letter-spacing:-0.3px;">21.84</div>
<div class="t" style="left:1348px;width:213px;top:451px;overflow:hidden;">20 - Ellis Lumber Co., Inc.</div>
<div class="t" style="left:1565px;width:186px;top:451px;overflow:hidden;">1540.000 - Mobilize &amp; Demobilize</div>
<div class="t" style="left:1755px;width:131px;top:451px;overflow:hidden;">1 - Material</div>
<div class="t" style="left:66px;width:182px;top:471px;overflow:hidden;">2x4x8 Doug Fir #2</div>
<div class="t" style="left:252px;width:58px;top:471px;overflow:hidden;">Each</div>
<div class="t r" style="left:311px;width:112px;top:471px;overflow:hidden;letter-spacing:-0.3px;">4.0000</div>
<div class="t r" style="left:425px;width:107px;top:471px;overflow:hidden;letter-spacing:-0.3px;">2.4000</div>
<div class="t r" style="left:554px;width:120px;top:471px;overflow:hidden;letter-spacing:-0.3px;">4.0000</div>
<div class="t r" style="left:676px;width:97px;top:471px;overflow:hidden;letter-spacing:-0.3px;">9.60</div>
<div class="t" style="left:778px;width:148px;top:471px;overflow:hidden;">1 - Sonoma,CA</div>
<div class="t r" style="left:927px;width:55px;top:471px;overflow:hidden;letter-spacing:-0.3px;">12.0000</div>
<div class="t r" style="left:984px;width:106px;top:471px;overflow:hidden;letter-spacing:-0.3px;">1.24</div>
<div class="t r" style="left:1092px;width:63px;top:471px;overflow:hidden;letter-spacing:-0.3px;">5.0000</div>
<div class="t r" style="left:1157px;width:88px;top:471px;overflow:hidden;letter-spacing:-0.3px;">0.58</div>
<div class="t r" style="left:1247px;width:96px;top:471px;overflow:hidden;letter-spacing:-0.3px;">12.14</div>
<div class="t" style="left:1348px;width:213px;top:471px;overflow:hidden;">20 - Ellis Lumber Co., Inc.</div>
<div class="t" style="left:1565px;width:186px;top:471px;overflow:hidden;">1540.000 - Mobilize &amp; Demobilize</div>
<div class="t" style="left:1755px;width:131px;top:471px;overflow:hidden;">1 - Material</div>
<div class="t" style="left:66px;width:182px;top:491px;overflow:hidden;">16d Galvanized Common</div>
<div class="t" style="left:252px;width:58px;top:491px;overflow:hidden;">LB (47)</div>
<div class="t r" style="left:311px;width:112px;top:491px;overflow:hidden;letter-spacing:-0.3px;">2.0000</div>
<div class="t r" style="left:425px;width:107px;top:491px;overflow:hidden;letter-spacing:-0.3px;">1.0609</div>
<div class="t r" style="left:554px;width:120px;top:491px;overflow:hidden;letter-spacing:-0.3px;">2.0000</div>
<div class="t r" style="left:676px;width:97px;top:491px;overflow:hidden;letter-spacing:-0.3px;">2.12</div>
<div class="t" style="left:778px;width:148px;top:491px;overflow:hidden;">1 - Sonoma,CA</div>
<div class="t r" style="left:927px;width:55px;top:491px;overflow:hidden;letter-spacing:-0.3px;">12.0000</div>
<div class="t r" style="left:984px;width:106px;top:491px;overflow:hidden;letter-spacing:-0.3px;">0.27</div>
<div class="t r" style="left:1092px;width:63px;top:491px;overflow:hidden;letter-spacing:-0.3px;">5.0000</div>
<div class="t r" style="left:1157px;width:88px;top:491px;overflow:hidden;letter-spacing:-0.3px;">0.13</div>
<div class="t r" style="left:1247px;width:96px;top:491px;overflow:hidden;letter-spacing:-0.3px;">2.68</div>
<div class="t" style="left:1348px;width:213px;top:491px;overflow:hidden;">20 - Ellis Lumber Co., Inc.</div>
<div class="t" style="left:1565px;width:186px;top:491px;overflow:hidden;">1540.000 - Mobilize &amp; Demobilize</div>
<div class="t" style="left:1755px;width:131px;top:491px;overflow:hidden;">1 - Material</div>
<div class="t" style="left:66px;width:182px;top:511px;overflow:hidden;">Carpenter</div>
<div class="t" style="left:252px;width:58px;top:511px;overflow:hidden;">MnHrs</div>
<div class="t r" style="left:311px;width:112px;top:511px;overflow:hidden;letter-spacing:-0.3px;">4.0000</div>
<div class="t r" style="left:425px;width:107px;top:511px;overflow:hidden;letter-spacing:-0.3px;">77.0000</div>
<div class="t r" style="left:554px;width:120px;top:511px;overflow:hidden;letter-spacing:-0.3px;">4.0000</div>
<div class="t r" style="left:676px;width:97px;top:511px;overflow:hidden;letter-spacing:-0.3px;">308.00</div>
<div class="t r" style="left:927px;width:55px;top:511px;overflow:hidden;letter-spacing:-0.3px;">12.0000</div>
<div class="t r" style="left:984px;width:106px;top:511px;overflow:hidden;letter-spacing:-0.3px;">36.96</div>
<div class="t r" style="left:1092px;width:63px;top:511px;overflow:hidden;letter-spacing:-0.3px;">5.0000</div>
<div class="t r" style="left:1157px;width:88px;top:511px;overflow:hidden;letter-spacing:-0.3px;">17.25</div>
<div class="t r" style="left:1247px;width:96px;top:511px;overflow:hidden;letter-spacing:-0.3px;">362.21</div>
<div class="t" style="left:1565px;width:186px;top:511px;overflow:hidden;">1540.000 - Mobilize &amp; Demobilize</div>
<div class="t" style="left:1755px;width:131px;top:511px;overflow:hidden;">2 - Labor</div>
<div class="t" style="left:66px;width:182px;top:531px;overflow:hidden;">Unskilled Labor-Carp</div>
<div class="t" style="left:252px;width:58px;top:531px;overflow:hidden;">MnHrs</div>
<div class="t r" style="left:311px;width:112px;top:531px;overflow:hidden;letter-spacing:-0.3px;">4.0000</div>
<div class="t r" style="left:425px;width:107px;top:531px;overflow:hidden;letter-spacing:-0.3px;">44.0000</div>
<div class="t r" style="left:554px;width:120px;top:531px;overflow:hidden;letter-spacing:-0.3px;">4.0000</div>
<div class="t r" style="left:676px;width:97px;top:531px;overflow:hidden;letter-spacing:-0.3px;">176.00</div>
<div class="t r" style="left:927px;width:55px;top:531px;overflow:hidden;letter-spacing:-0.3px;">12.0000</div>
<div class="t r" style="left:984px;width:106px;top:531px;overflow:hidden;letter-spacing:-0.3px;">21.12</div>
<div class="t r" style="left:1092px;width:63px;top:531px;overflow:hidden;letter-spacing:-0.3px;">5.0000</div>
<div class="t r" style="left:1157px;width:88px;top:531px;overflow:hidden;letter-spacing:-0.3px;">9.86</div>
<div class="t r" style="left:1247px;width:96px;top:531px;overflow:hidden;letter-spacing:-0.3px;">206.98</div>
<div class="t" style="left:1565px;width:186px;top:531px;overflow:hidden;">1540.000 - Mobilize &amp; Demobilize</div>
<div class="t" style="left:1755px;width:131px;top:531px;overflow:hidden;">2 - Labor</div>
<div class="t" style="left:66px;width:182px;top:571px;overflow:hidden;">Ongoing Cleanup</div>
<div class="t" style="left:66px;width:182px;top:591px;overflow:hidden;">Unskill Labor-General</div>
<div class="t" style="left:252px;width:58px;top:591px;overflow:hidden;">MnHrs</div>
<div class="t r" style="left:311px;width:112px;top:591px;overflow:hidden;letter-spacing:-0.3px;">60.0000</div>
<div class="t r" style="left:425px;width:107px;top:591px;overflow:hidden;letter-spacing:-0.3px;">27.5000</div>
<div class="t r" style="left:554px;width:120px;top:591px;overflow:hidden;letter-spacing:-0.3px;">60.0000</div>
<div class="t r" style="left:676px;width:97px;top:591px;overflow:hidden;letter-spacing:-0.3px;">1,650.00</div>
<div class="t r" style="left:927px;width:55px;top:591px;overflow:hidden;letter-spacing:-0.3px;">12.0000</div>
<div class="t r" style="left:984px;width:106px;top:591px;overflow:hidden;letter-spacing:-0.3px;">198.00</div>
<div class="t r" style="left:1092px;width:63px;top:591px;overflow:hidden;letter-spacing:-0.3px;">5.0000</div>
<div class="t r" style="left:1157px;width:88px;top:591px;overflow:hidden;letter-spacing:-0.3px;">92.40</div>
<div class="t r" style="left:1247px;width:96px;top:591px;overflow:hidden;letter-spacing:-0.3px;">1,940.40</div>
<div class="t" style="left:1565px;width:186px;top:591px;overflow:hidden;letter-spacing:-0.6px;">1000.000 - GENERAL REQUIREM...</div>
<div class="t" style="left:1755px;width:131px;top:591px;overflow:hidden;">2 - Labor</div>
<div class="t" style="left:66px;width:182px;top:631px;overflow:hidden;">Cleanup &amp; Demob</div>
<div class="t" style="left:66px;width:182px;top:651px;overflow:hidden;">Skill Labor-General</div>
<div class="t" style="left:252px;width:58px;top:651px;overflow:hidden;">MnHrs</div>
<div class="t r" style="left:311px;width:112px;top:651px;overflow:hidden;letter-spacing:-0.3px;">12.0000</div>
<div class="t r" style="left:425px;width:107px;top:651px;overflow:hidden;letter-spacing:-0.3px;">40.7000</div>
<div class="t r" style="left:554px;width:120px;top:651px;overflow:hidden;letter-spacing:-0.3px;">12.0000</div>
<div class="t r" style="left:676px;width:97px;top:651px;overflow:hidden;letter-spacing:-0.3px;">488.40</div>
<div class="t r" style="left:927px;width:55px;top:651px;overflow:hidden;letter-spacing:-0.3px;">12.0000</div>
<div class="t r" style="left:984px;width:106px;top:651px;overflow:hidden;letter-spacing:-0.3px;">58.61</div>
<div class="t r" style="left:1092px;width:63px;top:651px;overflow:hidden;letter-spacing:-0.3px;">5.0000</div>
<div class="t r" style="left:1157px;width:88px;top:651px;overflow:hidden;letter-spacing:-0.3px;">27.35</div>
<div class="t r" style="left:1247px;width:96px;top:651px;overflow:hidden;letter-spacing:-0.3px;">574.36</div>
<div class="t" style="left:1565px;width:186px;top:651px;overflow:hidden;letter-spacing:-0.6px;">1000.000 - GENERAL REQUIREM...</div>
<div class="t" style="left:1755px;width:131px;top:651px;overflow:hidden;">2 - Labor</div>
<div class="t" style="left:66px;width:182px;top:671px;overflow:hidden;">Unskill Labor-General</div>
<div class="t" style="left:252px;width:58px;top:671px;overflow:hidden;">MnHrs</div>
<div class="t r" style="left:311px;width:112px;top:671px;overflow:hidden;letter-spacing:-0.3px;">30.0000</div>
<div class="t r" style="left:425px;width:107px;top:671px;overflow:hidden;letter-spacing:-0.3px;">27.5000</div>
<div class="t r" style="left:554px;width:120px;top:671px;overflow:hidden;letter-spacing:-0.3px;">30.0000</div>
<div class="t r" style="left:676px;width:97px;top:671px;overflow:hidden;letter-spacing:-0.3px;">825.00</div>
<div class="t r" style="left:927px;width:55px;top:671px;overflow:hidden;letter-spacing:-0.3px;">12.0000</div>
<div class="t r" style="left:984px;width:106px;top:671px;overflow:hidden;letter-spacing:-0.3px;">99.00</div>
<div class="t r" style="left:1092px;width:63px;top:671px;overflow:hidden;letter-spacing:-0.3px;">5.0000</div>
<div class="t r" style="left:1157px;width:88px;top:671px;overflow:hidden;letter-spacing:-0.3px;">46.20</div>
<div class="t r" style="left:1247px;width:96px;top:671px;overflow:hidden;letter-spacing:-0.3px;">970.20</div>
<div class="t" style="left:1565px;width:186px;top:671px;overflow:hidden;letter-spacing:-0.6px;">1000.000 - GENERAL REQUIREM...</div>
<div class="t" style="left:1755px;width:131px;top:671px;overflow:hidden;">2 - Labor</div>
<div style="left:62px;top:166px;width:171px;height:21px;border:1px dotted #555;border-right:none"></div>
<div style="left:61px;top:167px;width:1px;height:19px;background:repeating-linear-gradient(#555 0 1px,#e3e3e3 1px 2px)"></div>
<div style="left:232px;top:167px;width:16px;height:20px;background:#f0f0f0;border-left:1px solid #8c8c8c;border-bottom:1px solid #8c8c8c"></div>
<div style="left:233px;top:167px;width:15px;height:1px;background:#fafafa"></div>
<div style="left:248px;top:167px;width:1px;height:20px;background:#8c8c8c"></div>
<svg style="left:233px;top:169px" width="15" height="18" viewBox="0 0 15 18"><defs><linearGradient id="dg" x1="0" y1="0" x2="0" y2="1"><stop offset="0" stop-color="#e4e4e4"/><stop offset="1" stop-color="#f4f4f4"/></linearGradient></defs><path d="M4.5 1.5h6v8h4l-7 7.5-7-7.5h4z" fill="url(#dg)" stroke="#7c7c7c" stroke-linejoin="round"/></svg>
<svg style="left:537px;top:148px" width="12" height="16" viewBox="0 0 12 16"><path d="M3.3 8V5.2a2.7 2.7 0 0 1 5.4 0V8" fill="none" stroke="#a88a50" stroke-width="2.2"/><path d="M3.3 8V5.2a2.7 2.7 0 0 1 5.4 0V8" fill="none" stroke="#ffc848" stroke-width="1"/><rect x="1" y="7" width="10" height="7" fill="#d8a010"/><rect x="1.8" y="8.2" width="8.4" height="1" fill="#ffd050"/><rect x="1.8" y="10.2" width="8.4" height="1" fill="#ffd050"/><rect x="1.8" y="12.2" width="8.4" height="1" fill="#ffd050"/></svg>
<div style="left:23px;top:891px;width:1864px;height:62px;border:1px solid #000;background:#f0f0f0"></div>
<div style="left:104px;top:912px;width:1779px;height:20px;background:#fff"></div>
<div style="left:104px;top:932px;width:1779px;height:20px;background:#daf2f9"></div>
<div style="left:24px;top:911px;width:1862px;height:1px;background:#a0a0a0"></div>
<div style="left:24px;top:931px;width:80px;height:1px;background:#a0a0a0"></div>
<div style="left:103px;top:892px;width:1px;height:60px;background:#a0a0a0"></div>
<div style="left:459px;top:892px;width:1px;height:60px;background:#a0a0a0"></div>
<div class="t r" style="left:56px;width:400px;top:895px;">Cost Total</div>
<div style="left:816px;top:892px;width:1px;height:60px;background:#a0a0a0"></div>
<div class="t r" style="left:413px;width:400px;top:895px;">Overhead</div>
<div style="left:1171px;top:892px;width:1px;height:60px;background:#a0a0a0"></div>
<div class="t r" style="left:768px;width:400px;top:895px;">Profit</div>
<div style="left:1527px;top:892px;width:1px;height:60px;background:#a0a0a0"></div>
<div class="t r" style="left:1124px;width:400px;top:895px;">Ext Price</div>
<div style="left:1883px;top:892px;width:1px;height:60px;background:#a0a0a0"></div>
<div class="t r" style="left:1480px;width:400px;top:895px;">Gross Margin</div>
<div style="left:1883px;top:892px;width:3px;height:60px;background:#a0a0a0"></div>
<div class="t" style="left:26px;top:915px;">Current Grid</div>
<div class="t" style="left:26px;top:935px;">All Grids</div>
<div class="t r" style="left:58px;width:400px;top:915px;letter-spacing:-0.35px">80,632.32</div>
<div class="t r" style="left:58px;width:400px;top:935px;letter-spacing:-0.35px">461,875.01</div>
<div class="t r" style="left:415px;width:400px;top:915px;letter-spacing:-0.35px">9,675.88</div>
<div class="t r" style="left:415px;width:400px;top:935px;letter-spacing:-0.35px">55,425.00</div>
<div class="t r" style="left:770px;width:400px;top:915px;letter-spacing:-0.35px">4,515.42</div>
<div class="t r" style="left:770px;width:400px;top:935px;letter-spacing:-0.35px">25,865.02</div>
<div class="t r" style="left:1126px;width:400px;top:915px;letter-spacing:-0.35px">94,823.62</div>
<div class="t r" style="left:1126px;width:400px;top:935px;letter-spacing:-0.35px">543,164.99</div>
<div class="t r" style="left:1482px;width:400px;top:915px;letter-spacing:-0.35px">14.97 %</div>
<div class="t r" style="left:1482px;width:400px;top:935px;letter-spacing:-0.35px">14.97 %</div>
<div style="left:0px;top:983px;width:87px;height:23px;background:#f7f7f7;border:1px solid #e5e5e5;border-radius:3px"></div>
<div class="t" style="left:0px;width:87px;top:988px;text-align:center;color:#a0a0a0">Go to Part</div>
<div style="left:94px;top:983px;width:117px;height:23px;background:#f7f7f7;border:1px solid #e5e5e5;border-radius:3px"></div>
<div class="t" style="left:94px;width:117px;top:988px;text-align:center;color:#a0a0a0">Go to Assembly</div>
<div style="left:217px;top:983px;width:88px;height:23px;background:#fdfdfd;border:1px solid #d0d0d0;border-bottom-color:#b0b0b0;border-radius:3px"></div>
<div class="t" style="left:217px;width:88px;top:988px;text-align:center">Row Tags</div>
<div style="left:311px;top:983px;width:88px;height:23px;background:#f7f7f7;border:1px solid #e5e5e5;border-radius:3px"></div>
<div class="t" style="left:311px;width:88px;top:988px;text-align:center;color:#a0a0a0">Inventory</div>
<div class="t" style="left:954px;top:988px;">Bid Amount:</div>
<div class="t" style="left:1079px;top:988px;font-weight:bold">553,475.82</div>
<div style="left:532px;top:45px;width:2px;height:278px;background:rgba(0,0,0,0.28)"></div>
<div style="left:294px;top:321px;width:240px;height:2px;background:rgba(0,0,0,0.28)"></div>
<div style="left:534px;top:46px;width:1px;height:277px;background:rgba(0,0,0,0.08)"></div>
<div style="left:295px;top:323px;width:240px;height:1px;background:rgba(0,0,0,0.08)"></div>
<div style="left:290px;top:22px;width:52px;height:21px;background:#fbfbfb;border:1px solid #808080;border-bottom:none"></div>
<div class="t" style="left:299px;top:25px;">Export</div>
<div style="left:290px;top:41px;width:242px;height:280px;background:#fcfcfc;border:1px solid #808080"></div>
<div style="left:291px;top:42px;width:51px;height:2px;background:#fbfbfb"></div>
<div style="left:292px;top:43px;width:23px;height:276px;background:linear-gradient(to right,#fafafa,#f0f0f0)"></div>
<div class="t" style="left:326px;top:47px;letter-spacing:-0.22px">Budget</div>
<div class="t" style="left:326px;top:69px;letter-spacing:-0.22px">Change Orders</div>
<svg style="left:516px;top:72px" width="5" height="8" viewBox="0 0 5 8"><path d="M0 0.5l4 3.5-4 3.5z" fill="#000"/></svg>
<div class="t" style="left:326px;top:91px;letter-spacing:-0.22px">Proposal</div>
<svg style="left:516px;top:94px" width="5" height="8" viewBox="0 0 5 8"><path d="M0 0.5l4 3.5-4 3.5z" fill="#000"/></svg>
<div class="t" style="left:326px;top:113px;letter-spacing:-0.22px">Purchase Orders</div>
<svg style="left:516px;top:116px" width="5" height="8" viewBox="0 0 5 8"><path d="M0 0.5l4 3.5-4 3.5z" fill="#000"/></svg>
<div class="t" style="left:326px;top:135px;letter-spacing:-0.22px">Requests For Proposal</div>
<svg style="left:516px;top:138px" width="5" height="8" viewBox="0 0 5 8"><path d="M0 0.5l4 3.5-4 3.5z" fill="#000"/></svg>
<div class="t" style="left:326px;top:157px;letter-spacing:-0.22px">Subcontracts</div>
<svg style="left:516px;top:160px" width="5" height="8" viewBox="0 0 5 8"><path d="M0 0.5l4 3.5-4 3.5z" fill="#000"/></svg>
<div class="t" style="left:326px;top:179px;letter-spacing:-0.22px">Service Work Order</div>
<svg style="left:516px;top:182px" width="5" height="8" viewBox="0 0 5 8"><path d="M0 0.5l4 3.5-4 3.5z" fill="#000"/></svg>
<div class="t" style="left:326px;top:207px;letter-spacing:-0.22px">Grid File</div>
<div class="t" style="left:326px;top:229px;letter-spacing:-0.22px">Takeoff File</div>
<div class="t" style="left:326px;top:251px;letter-spacing:-0.22px">Project Values File</div>
<div class="t" style="left:326px;top:273px;letter-spacing:-0.22px">As Template</div>
<div class="t" style="left:326px;top:301px;letter-spacing:-0.22px">Takeoff Prices to Parts Database</div>
<svg style="left:516px;top:304px" width="5" height="8" viewBox="0 0 5 8"><path d="M0 0.5l4 3.5-4 3.5z" fill="#000"/></svg>
<div style="left:323px;top:200px;width:207px;height:1px;background:#bdbdbd"></div>
<div style="left:323px;top:294px;width:207px;height:1px;background:#bdbdbd"></div>
<div style="left:291px;top:41px;width:50px;height:1px;background:#fbfbfb"></div>
</body></html>
